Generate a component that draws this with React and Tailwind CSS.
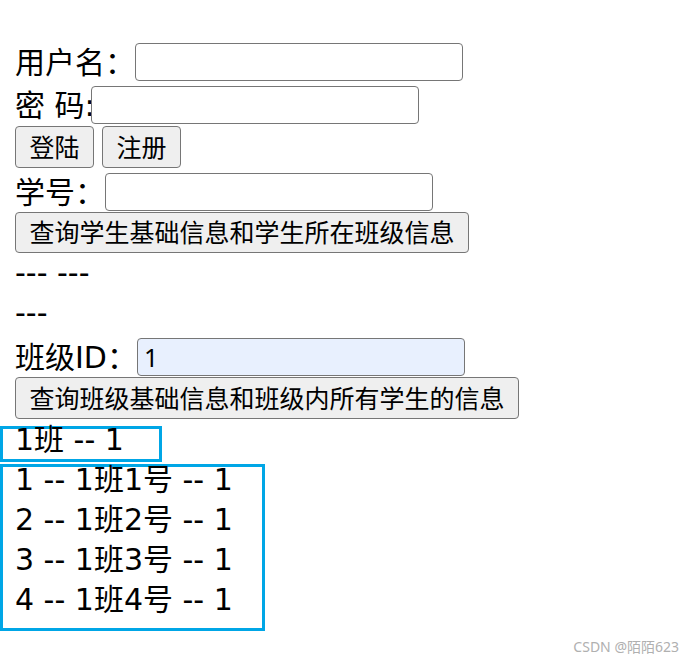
import React from "react";

const font = { fontFamily: '"DejaVu Sans", "Noto Sans CJK SC", sans-serif' };

function Field({ label, labelWidth, value, filled }) {
  return (
    <div className={"flex items-center pl-[15px] " + labelWidth.row}>
      <span className={"shrink-0 whitespace-pre " + labelWidth.w}>{label}</span>
      <input
        type="text"
        defaultValue={value}
        className={
          "h-[38px] w-[328px] rounded-[4px] border border-[#767676] px-[6px] text-[25px] text-black focus:outline-none " +
          (filled ? "bg-[#e8f0fe]" : "bg-white")
        }
        style={{ fontFamily: '"Noto Sans", "Noto Sans CJK SC", sans-serif' }}
      />
    </div>
  );
}

function Btn({ children, w, h }) {
  return (
    <button
      className={
        "rounded-[4px] border border-[#767676] bg-[#efefef] text-[25px] leading-none text-black " + w + " " + h
      }
      style={{ fontFamily: '"Noto Sans", "Noto Sans CJK SC", sans-serif' }}
    >
      {children}
    </button>
  );
}

export default function App() {
  const students = ["1 -- 1班1号 -- 1", "2 -- 1班2号 -- 1", "3 -- 1班3号 -- 1", "4 -- 1班4号 -- 1"];
  return (
    <div className="relative min-h-[663px] bg-white pt-[40px] text-[30px] text-black" style={font}>
      <Field label="用户名：" labelWidth={{ row: "h-[44px]", w: "w-[120px]" }} />
      <Field label="密 码:" labelWidth={{ row: "h-[42px]", w: "w-[76px]" }} />
      <div className="flex h-[42px] gap-[8px] pl-[15px]">
        <Btn w="w-[79px]" h="h-[42px]">登陆</Btn>
        <Btn w="w-[79px]" h="h-[42px]">注册</Btn>
      </div>
      <div className="pt-[4px]">
        <Field label="学号：" labelWidth={{ row: "h-[40px]", w: "w-[90px]" }} />
      </div>
      <div className="flex h-[41px] pl-[15px]">
        <Btn w="w-[454px]" h="h-[41px]">查询学生基础信息和学生所在班级信息</Btn>
      </div>
      <div className="h-[40px] pl-[15px] leading-[40px]">--- ---</div>
      <div className="h-[40px] pl-[15px] leading-[40px]">---</div>
      <div className="pt-[4px]">
        <Field label="班级ID：" labelWidth={{ row: "h-[40px]", w: "w-[122px]" }} value="1" filled />
      </div>
      <div className="flex h-[42px] pl-[15px]">
        <Btn w="w-[504px]" h="h-[42px]">查询班级基础信息和班级内所有学生的信息</Btn>
      </div>
      <div className="mt-[7px] h-[36px] w-[162px] border-[3px] border-[#00a6e6]">
        <div className="-mt-[9px] whitespace-nowrap pl-[12px] leading-[40px]">1班 -- 1</div>
      </div>
      <div className="mt-[2px] h-[167px] w-[265px] border-[3px] border-[#00a6e6]">
        <div className="-mt-[7px] pl-[12px] leading-[40px]">
          {students.map((s) => (
            <div key={s} className="h-[40px] whitespace-nowrap">
              {s}
            </div>
          ))}
        </div>
      </div>
      <div
        className="absolute bottom-[6px] right-[18px] text-[14px] text-[#b0b0b0]"
        style={{ fontFamily: '"Noto Sans", "Noto Sans CJK SC", sans-serif' }}
      >
        CSDN @陌陌623
      </div>
    </div>
  );
}
